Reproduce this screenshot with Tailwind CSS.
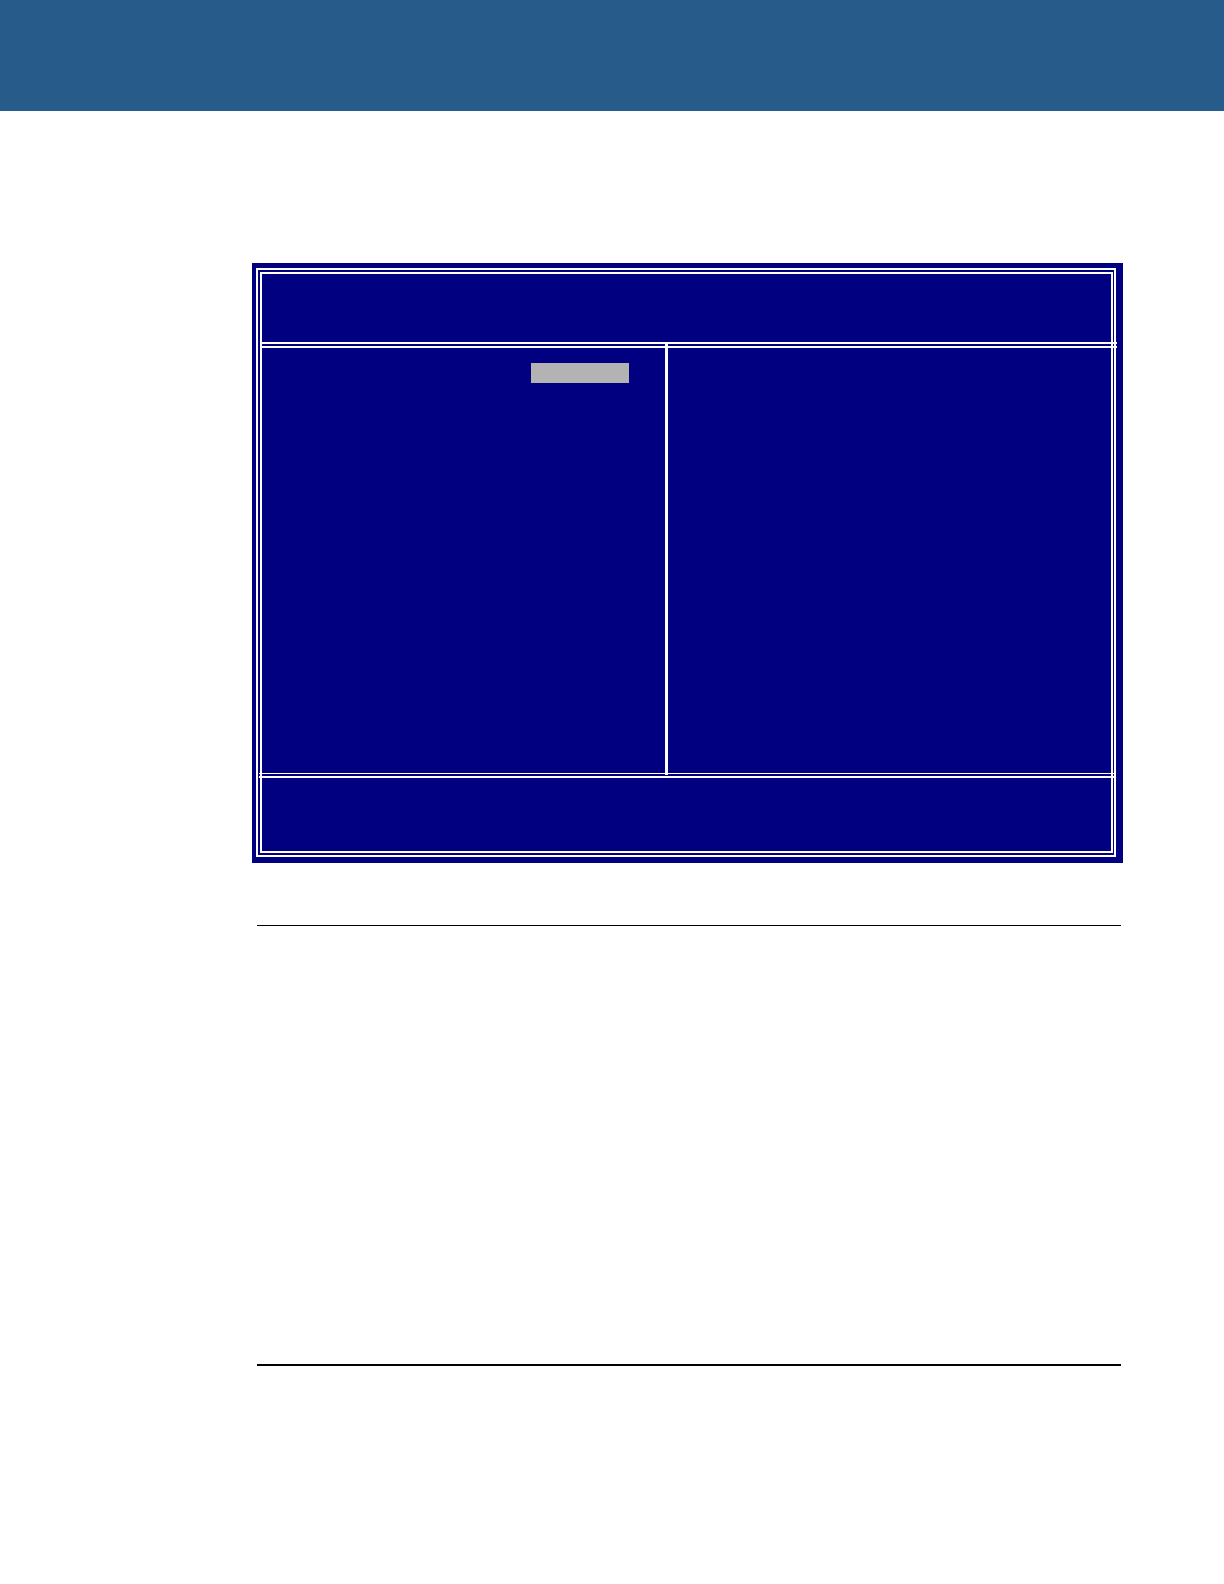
<!DOCTYPE html>
<html lang="en">
<head>
  <meta charset="UTF-8">
  <meta name="viewport" content="width=device-width, initial-scale=1.0">
  <title>BIOS Setup</title>
  <script src="https://cdn.jsdelivr.net/npm/@tailwindcss/browser@4"></script>
</head>
<body class="min-h-screen bg-white">
  <header class="h-[111px] bg-[#265b8a]"></header>

  <main class="mt-[152px] ml-[252px] mr-[101px]">
    <!-- Setup screen with a double frame -->
    <section class="bg-[#000080] pt-[5px] pr-[7px] pb-[6px] pl-1">
      <div class="border-2 border-white pt-[2px] pr-px pb-[2px] pl-[2px]">
        <div class="border-2 border-white">
          <div class="h-[68px]"></div>
          <div class="-mr-[6px] h-[6px] border-y-2 border-white"></div>

          <div class="grid min-h-[425px] grid-cols-[403fr_3px_443fr]">
            <div class="flex items-start justify-end pt-[15px] pr-9">
              <!-- Selected value -->
              <div class="h-5 w-[98px] bg-[#b3b3b3]"></div>
            </div>
            <div class="-mt-1 -mb-[2px] bg-white"></div>
            <div></div>
          </div>

          <div class="-ml-[3px] -mr-[5px] h-[5px] border-t border-b-2 border-white"></div>
          <div class="h-[73px]"></div>
        </div>
      </div>
    </section>

    <section class="mt-[62px] mr-[2px] ml-[5px] min-h-[441px] border-t border-b-2 border-black"></section>
  </main>
</body>
</html>
